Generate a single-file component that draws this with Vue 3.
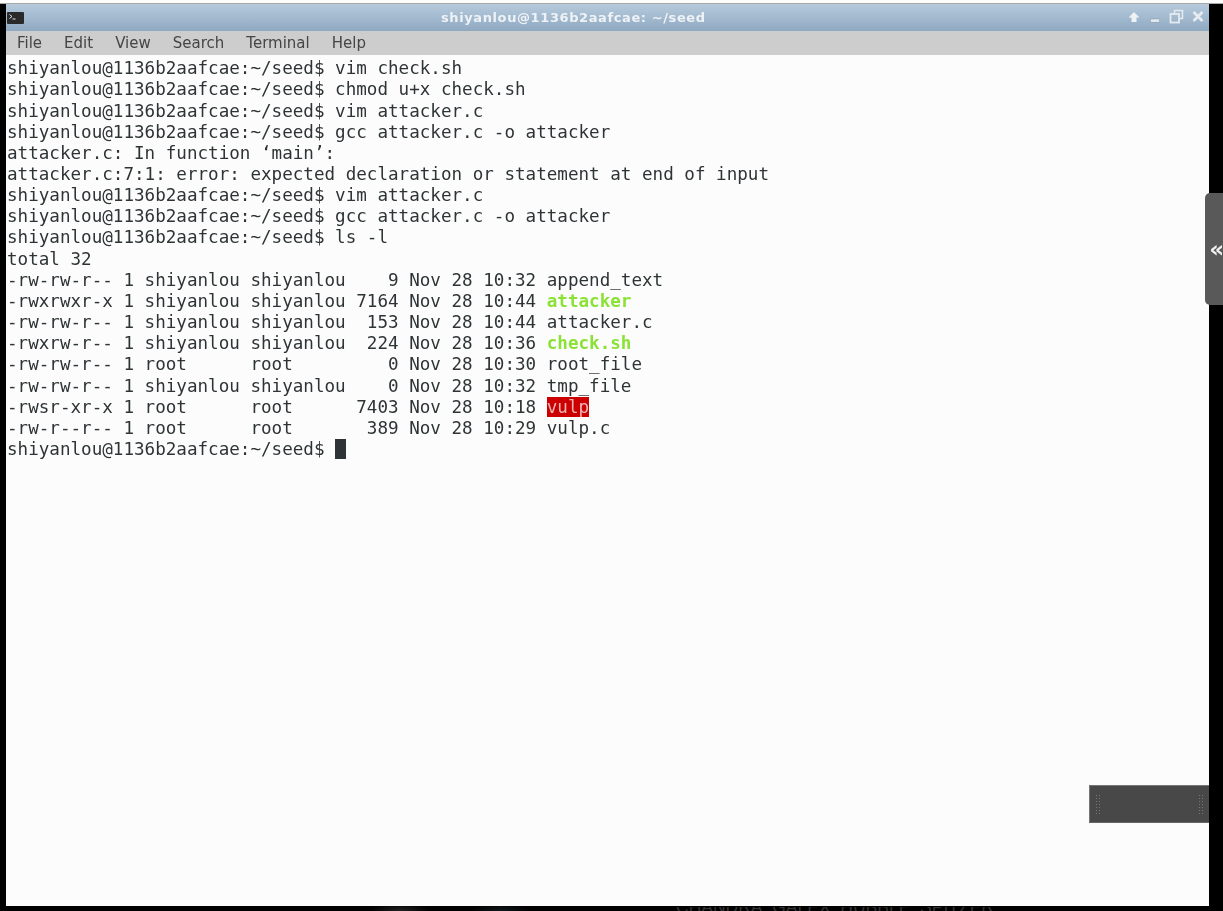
<script setup>
const lines = [
  [['shiyanlou@1136b2aafcae:~/seed$ vim check.sh']],
  [['shiyanlou@1136b2aafcae:~/seed$ chmod u+x check.sh']],
  [['shiyanlou@1136b2aafcae:~/seed$ vim attacker.c']],
  [['shiyanlou@1136b2aafcae:~/seed$ gcc attacker.c -o attacker']],
  [['attacker.c: In function ‘main’:']],
  [['attacker.c:7:1: error: expected declaration or statement at end of input']],
  [['shiyanlou@1136b2aafcae:~/seed$ vim attacker.c']],
  [['shiyanlou@1136b2aafcae:~/seed$ gcc attacker.c -o attacker']],
  [['shiyanlou@1136b2aafcae:~/seed$ ls -l']],
  [['total 32']],
  [['-rw-rw-r-- 1 shiyanlou shiyanlou    9 Nov 28 10:32 append_text']],
  [['-rwxrwxr-x 1 shiyanlou shiyanlou 7164 Nov 28 10:44 '], ['attacker', 'exec']],
  [['-rw-rw-r-- 1 shiyanlou shiyanlou  153 Nov 28 10:44 attacker.c']],
  [['-rwxrw-r-- 1 shiyanlou shiyanlou  224 Nov 28 10:36 '], ['check.sh', 'exec']],
  [['-rw-rw-r-- 1 root      root         0 Nov 28 10:30 root_file']],
  [['-rw-rw-r-- 1 shiyanlou shiyanlou    0 Nov 28 10:32 tmp_file']],
  [['-rwsr-xr-x 1 root      root      7403 Nov 28 10:18 '], ['vulp', 'suid']],
  [['-rw-r--r-- 1 root      root       389 Nov 28 10:29 vulp.c']],
  [['shiyanlou@1136b2aafcae:~/seed$ '], [' ', 'cursor']],
]
const menus = ['File', 'Edit', 'View', 'Search', 'Terminal', 'Help']
</script>

<template>
  <div class="screen">
    <div class="top-strip"></div>
    <div class="window">
      <header class="titlebar">
        <span class="app-icon">
          <svg width="17" height="12" viewBox="0 0 17 12">
            <rect width="17" height="12" rx="1" fill="#2a2a2a" />
            <path d="M2.5 2.5 L5 4.5 L2.5 6.5" fill="none" stroke="#e8e8e8" stroke-width="1" />
            <path d="M5.5 7 H8.5" stroke="#e8e8e8" stroke-width="1" />
          </svg>
        </span>
        <span class="title">shiyanlou@1136b2aafcae: ~/seed</span>
        <span class="controls">
          <svg width="14" height="14" viewBox="0 0 14 14">
            <path d="M7 2 L12.5 7.5 H9.5 V12 H4.5 V7.5 H1.5 Z" fill="#eef2f5" />
          </svg>
          <svg width="10" height="14" viewBox="0 0 10 14">
            <rect x="0.5" y="9" width="9" height="3.2" fill="#e6ebf0" stroke="#7f97ad" stroke-width="0.5" />
          </svg>
          <svg width="15" height="15" viewBox="0 0 15 15">
            <path d="M5.5 4 V1.5 H13.5 V9.5 H10.5" fill="none" stroke="#e6ebf0" stroke-width="1.5" />
            <rect x="1.5" y="5" width="8.5" height="8.5" fill="none" stroke="#e6ebf0" stroke-width="1.8" />
          </svg>
          <svg class="close" width="12" height="13" viewBox="0 0 12 13">
            <path d="M1.5 2 L10.5 11 M10.5 2 L1.5 11" stroke="#e6ebf0" stroke-width="2.8" />
          </svg>
        </span>
      </header>
      <nav class="menubar">
        <span v-for="m in menus" :key="m" class="menu-item">{{ m }}</span>
      </nav>
      <main class="terminal">
        <div class="lines">
          <div v-for="(line, i) in lines" :key="i" class="line"><span v-for="(seg, j) in line" :key="j" :class="seg[1]">{{ seg[0] }}</span></div>
        </div>
      </main>
    </div>
    <div class="side-handle">
      <span class="chev">«</span>
    </div>
    <div class="float-bar">
      <span class="grip"></span>
      <span class="grip"></span>
    </div>
    <div class="wallpaper-text">CHANDRA, GALEX, HUBBLE, SPITZER</div>
  </div>
</template>

<style scoped>
.screen {
  position: relative;
  width: 1223px;
  height: 911px;
  overflow: hidden;
  display: flex;
  flex-direction: column;
  background:
    radial-gradient(ellipse 30px 8px at 400px 911px, #222 0%, transparent 100%),
    radial-gradient(ellipse 30px 8px at 500px 911px, #10181a 0%, transparent 100%),
    #000;
}
.top-strip {
  height: 3px;
  background: #fcfcfc;
  border-bottom: 1px solid #a8a8a8;
  flex: none;
}
.window {
  width: 1203px;
  margin-left: 6px;
  height: 902px;
  display: flex;
  flex-direction: column;
  flex: none;
}
.titlebar {
  position: relative;
  height: 27px;
  flex: none;
  display: flex;
  align-items: center;
  padding-left: 435px;
  background: linear-gradient(#b6cadc, #8fa9c1);
}
.app-icon {
  position: absolute;
  left: 1px;
  top: 8px;
  display: flex;
}
.title {
  color: #eef2f6;
  font: 700 13px "DejaVu Sans", sans-serif;
  letter-spacing: 0.6px;
  white-space: nowrap;
  filter: blur(0.4px);
}
.controls {
  position: absolute;
  right: 5px;
  top: 5px;
  display: flex;
  align-items: center;
  gap: 9px;
  filter: blur(0.3px);
}
.close {
  margin-left: -1px;
}
.menubar {
  height: 24px;
  flex: none;
  background: #cdcdcd;
  display: flex;
  align-items: center;
  gap: 22px;
  padding-left: 11px;
  color: #454545;
  font: 15px "DejaVu Sans", sans-serif;
}
.menu-item {
  filter: blur(0.4px);
}
.terminal {
  flex: 1;
  background: #fcfcfc;
  padding-top: 3.2px;
}
.lines {
  font: 17.58px/21.17px "DejaVu Sans Mono", monospace;
  color: #2e3436;
  filter: blur(0.4px);
}
.line {
  height: 21.17px;
  padding-left: 1px;
  white-space: pre;
}
.exec {
  color: #8ae234;
  font-weight: 700;
}
.suid {
  background: #cc0000;
  color: #eeb4b4;
}
.cursor {
  background: #2e3436;
}
.side-handle {
  position: absolute;
  left: 1205px;
  top: 193px;
  width: 18px;
  height: 112px;
  box-sizing: border-box;
  background: #595959;
  border-radius: 5px 0 0 5px;
  display: flex;
  align-items: center;
  justify-content: flex-end;
}
.chev {
  color: #f0f0f0;
  font: 700 23px/1 "DejaVu Sans", sans-serif;
  margin-right: -1px;
  filter: blur(0.3px);
}
.float-bar {
  position: absolute;
  left: 1089px;
  top: 785px;
  width: 120px;
  height: 38px;
  box-sizing: border-box;
  background: #484848;
  border-top: 1px solid #777;
  border-bottom: 1px solid #666;
  border-left: 1px solid #777;
  display: flex;
  align-items: center;
  justify-content: space-between;
  padding: 0 5px;
}
.grip {
  width: 6px;
  height: 20px;
  background-image: radial-gradient(circle, #777 0.9px, transparent 1px);
  background-size: 3px 3px;
}
.wallpaper-text {
  position: absolute;
  left: 676px;
  top: 897px;
  height: 20px;
  color: #333;
  font: 17.5px/20px "Liberation Sans", sans-serif;
  white-space: nowrap;
  clip-path: inset(10px 0 0 0);
}
</style>

<style>
html, body { background: #000; }
</style>
